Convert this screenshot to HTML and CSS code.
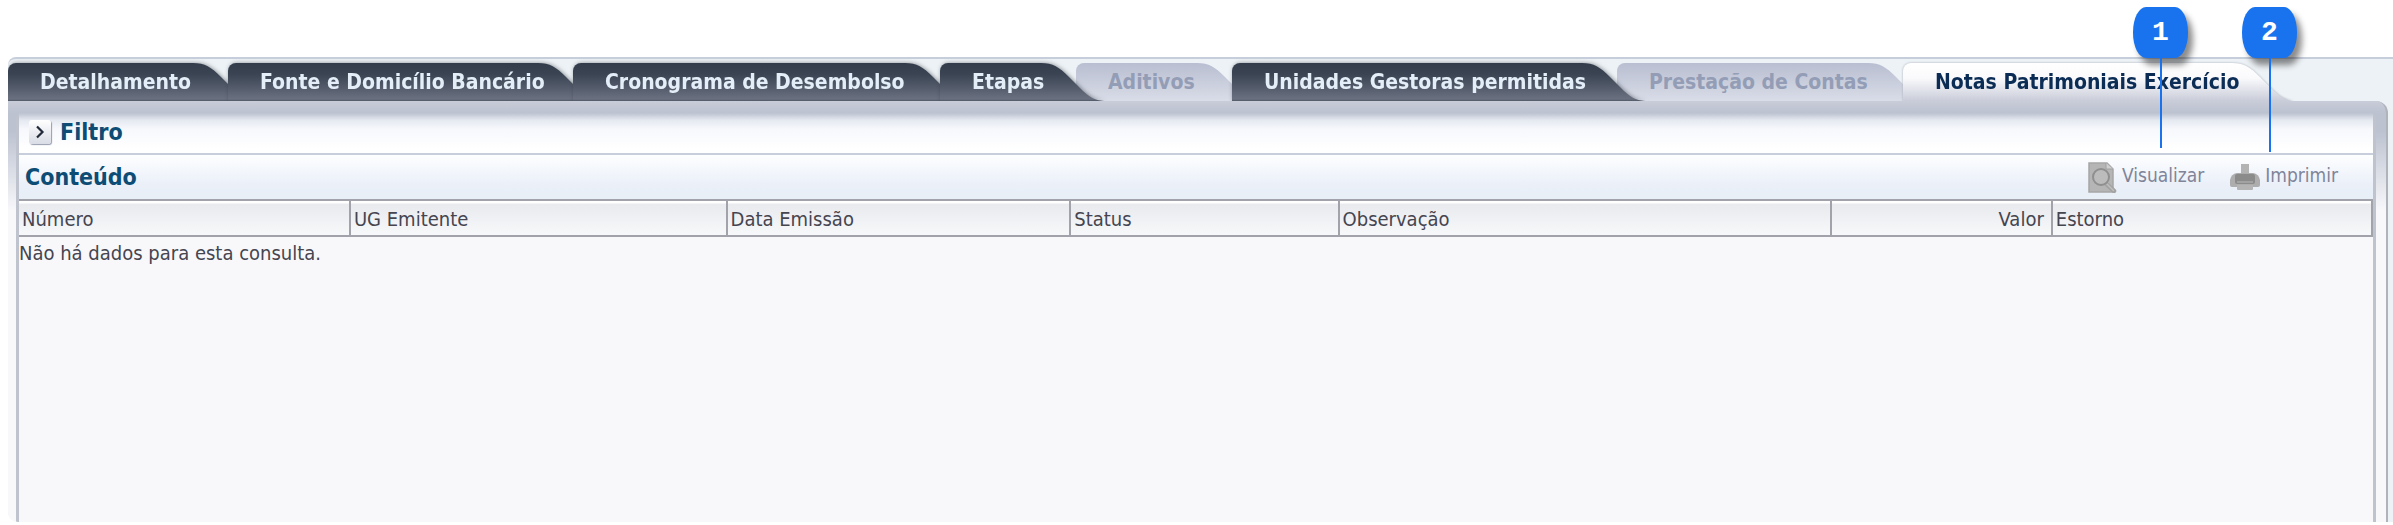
FILE: index.html
```html
<!DOCTYPE html>
<html lang="pt-BR">
<head>
<meta charset="utf-8">
<title>Notas Patrimoniais Exercício</title>
<link rel="stylesheet" href="styles.css">
</head>
<body>
<main class="window">
  <div class="tabs" role="tablist">
    <button class="tab tab-dark" role="tab"><span>Detalhamento</span></button>
    <button class="tab tab-dark" role="tab"><span>Fonte e Domicílio Bancário</span></button>
    <button class="tab tab-dark" role="tab"><span>Cronograma de Desembolso</span></button>
    <button class="tab tab-dark" role="tab"><span>Etapas</span></button>
    <button class="tab tab-disabled" role="tab" disabled><span>Aditivos</span></button>
    <button class="tab tab-dark" role="tab"><span>Unidades Gestoras permitidas</span></button>
    <button class="tab tab-disabled" role="tab" disabled><span>Prestação de Contas</span></button>
    <button class="tab tab-active" role="tab" aria-selected="true"><span>Notas Patrimoniais Exercício</span></button>
  </div>
  <div class="frame">
    <section class="panel">
      <div class="filter">
        <button class="expand" aria-label="Expandir filtro">
          <svg width="10" height="14" viewBox="0 0 10 14"><path d="M2 1.500L7.500 7L2 12.500" fill="none" stroke="#222a38" stroke-width="2.200"/></svg>
        </button>
        <h2 class="title">Filtro</h2>
      </div>
      <div class="toolbar">
        <h2 class="title">Conteúdo</h2>
        <div class="actions">
          <button class="action" disabled>
            <svg width="29" height="31" viewBox="0 0 29 31">
              <path d="M1 1H19L25 7V30H1Z" fill="#b5b5b5" stroke="#a6a6a6" stroke-width="1.500"/>
              <path d="M18 1V7H25" fill="#cfcfcf" stroke="#a0a0a0"/>
              <path d="M18.500 22L26 29" stroke="#a3a3a3" stroke-width="4.500" stroke-linecap="round"/>
              <path d="M19 22L25.500 28.500" stroke="#bebebe" stroke-width="1.500" stroke-linecap="round"/>
              <circle cx="13" cy="15" r="8" fill="#bcbcbc" stroke="#8f8f8f" stroke-width="2"/>
            </svg>
            <span>Visualizar</span>
          </button>
          <button class="action" disabled>
            <svg width="30" height="28" viewBox="0 0 30 28">
              <rect x="11" y="1" width="8" height="11" fill="#b3b3b3"/>
              <path d="M7 10H23Q29 11 30 17V22Q30 24 28 24H2Q0 24 0 22V17Q1 11 7 10Z" fill="#adadad"/>
              <rect x="5" y="11" width="20" height="10" rx="2" fill="#8b8b8b"/>
              <path d="M7 19H23" stroke="#a2a2a2" stroke-width="2"/>
              <path d="M7 22H23V26Q23 27 22 27H8Q7 27 7 26Z" fill="#b4b4b4"/>
            </svg>
            <span>Imprimir</span>
          </button>
        </div>
      </div>
      <table class="grid">
        <colgroup>
          <col class="c-num"><col class="c-ug"><col class="c-data"><col class="c-status"><col class="c-obs"><col class="c-valor"><col class="c-estorno">
        </colgroup>
        <thead>
          <tr><th>Número</th><th>UG Emitente</th><th>Data Emissão</th><th>Status</th><th>Observação</th><th class="num">Valor</th><th>Estorno</th></tr>
        </thead>
        <tbody>
          <tr><td colspan="7">Não há dados para esta consulta.</td></tr>
        </tbody>
      </table>
    </section>
  </div>
</main>
<div class="callout callout-one"><span class="badge">1</span><span class="stem"></span></div>
<div class="callout callout-two"><span class="badge">2</span><span class="stem"></span></div>
</body>
</html>
```
FILE: styles.css
```css
* { box-sizing: border-box; }

body {
  margin: 0;
  min-height: 100vh;
  padding: 57px 0 3px 8px;
  display: flex;
  position: relative;
  background: #fff;
  color: #454550;
  font: 20px/24px "DejaVu Sans Condensed", "Noto Sans", sans-serif;
}

button { font: inherit; border: 0; padding: 0; background: none; color: inherit; }

.window {
  flex: 1;
  display: flex;
  flex-direction: column;
  background: #edf2f6;
  border-top: 2px solid #c6cddb;
  border-radius: 8px 0 0 10px;
  overflow: hidden;
}

.tabs {
  display: grid;
  grid-template-columns: 220fr 345fr 367fr 136fr 156fr 385fr 286fr 364fr;
  padding: 4px 126px 0 0;
}

.tab {
  position: relative;
  isolation: isolate;
  height: 38px;
  padding: 0 0 0 32px;
  text-align: left;
  white-space: nowrap;
  font-size: 21px;
  font-weight: bold;
}

/* Tab body and its slanted tail */
.tab::before,
.tab::after {
  content: "";
  position: absolute;
  z-index: -1;
  top: 0;
  bottom: 0;
  background: var(--fill);
}
.tab::before { left: 0; right: 35px; border-radius: 8px 0 0 0; }
.tab::after {
  right: -32px;
  width: 67px;
  clip-path: path("M0 0C12 0 18 4 28 14L42 28C51 36 56 38 67 38H0Z");
}

.tab-dark {
  --fill: linear-gradient(#323c4b, #3a4453 30%, #6a7080 95%, #505866);
  z-index: 1;
  color: #e4eef8;
  filter: drop-shadow(1px 0 2px rgba(40, 45, 55, 0.5));
}
.tab-disabled { --fill: linear-gradient(#b9bed1, #d9dde8); color: #949db6; }
.tab-active {
  --fill: linear-gradient(#fff, #fafafc 40%, #c9ccd9);
  z-index: 2;
  color: #0b2c55;
  filter: drop-shadow(0 0 1px #a9adb8);
}

.frame {
  flex: 1;
  position: relative;
  z-index: 3;
  margin-right: 5px;
  padding: 12px 10px 0 8px;
  border-right: 2px solid #b0b4ba;
  border-radius: 0 12px 0 0;
  background: linear-gradient(#c9ccd9, #bcc2d0 12px, #bcc2d0 30px, #f8f8fb 110px);
}

.panel {
  height: 100%;
  border: solid #bfc3ce;
  border-width: 0 3px;
  border-radius: 5px 5px 0 0;
  background: #f8f8fb;
}

.title { margin: 0; font-size: 23px; line-height: 28px; font-weight: bold; color: #0d4c74; }

.filter {
  display: flex;
  align-items: center;
  gap: 9px;
  height: 42px;
  padding: 0 0 3px 10px;
  border-bottom: 2px solid #c8cedb;
  background: linear-gradient(#bcc2d0, #e4e8f0 7px, #f6f8fc 16px, #fff 36px);
}

.expand {
  width: 22px;
  height: 24px;
  display: grid;
  place-items: center;
  border-radius: 3px;
  background: linear-gradient(#fff, #d9dce5);
  box-shadow: 1px 1px 1px #969dae;
}

.toolbar {
  display: flex;
  align-items: center;
  justify-content: space-between;
  height: 44px;
  padding: 0 35px 0 6px;
  background: linear-gradient(#fdfeff, #eaeff8 70%, #e8eff7);
}

.actions { display: flex; gap: 26px; }
.action { display: flex; align-items: center; gap: 5px; color: #7f8499; font-size: 19px; }
.action span { padding-bottom: 4px; }

.grid { width: 100%; table-layout: fixed; border-spacing: 0; }
.grid th {
  height: 38px;
  padding: 2px 7px 0 3px;
  border: solid #a2a3aa;
  border-width: 2px 2px 2px 0;
  background: linear-gradient(#fff 2px, #e9eaee 3px, #f7f8fa);
  text-align: left;
  font-weight: normal;
}
.grid .num { text-align: right; }
.grid td { padding: 4px 0; }
.c-num { width: 14.1%; }
.c-ug { width: 16%; }
.c-data { width: 14.6%; }
.c-status { width: 11.4%; }
.c-obs { width: 20.9%; }
.c-valor { width: 9.4%; }

/* Numbered callouts lying over the page */
.callout {
  position: absolute;
  z-index: 5;
  top: 7px;
  display: flex;
  flex-direction: column;
  align-items: center;
}
.callout-one { right: 205px; height: 141px; }
.callout-two { right: 96px; height: 145px; }
.badge {
  width: 55px;
  height: 51px;
  border-radius: 13px / 25px;
  background: #1a73ee;
  color: #fff;
  text-align: center;
  font: bold 28px/51px "Liberation Mono", monospace;
  box-shadow: 5px 7px 6px rgba(0, 0, 0, 0.45);
}
.stem { flex: 1; width: 2px; background: #1a73ee; }
```
